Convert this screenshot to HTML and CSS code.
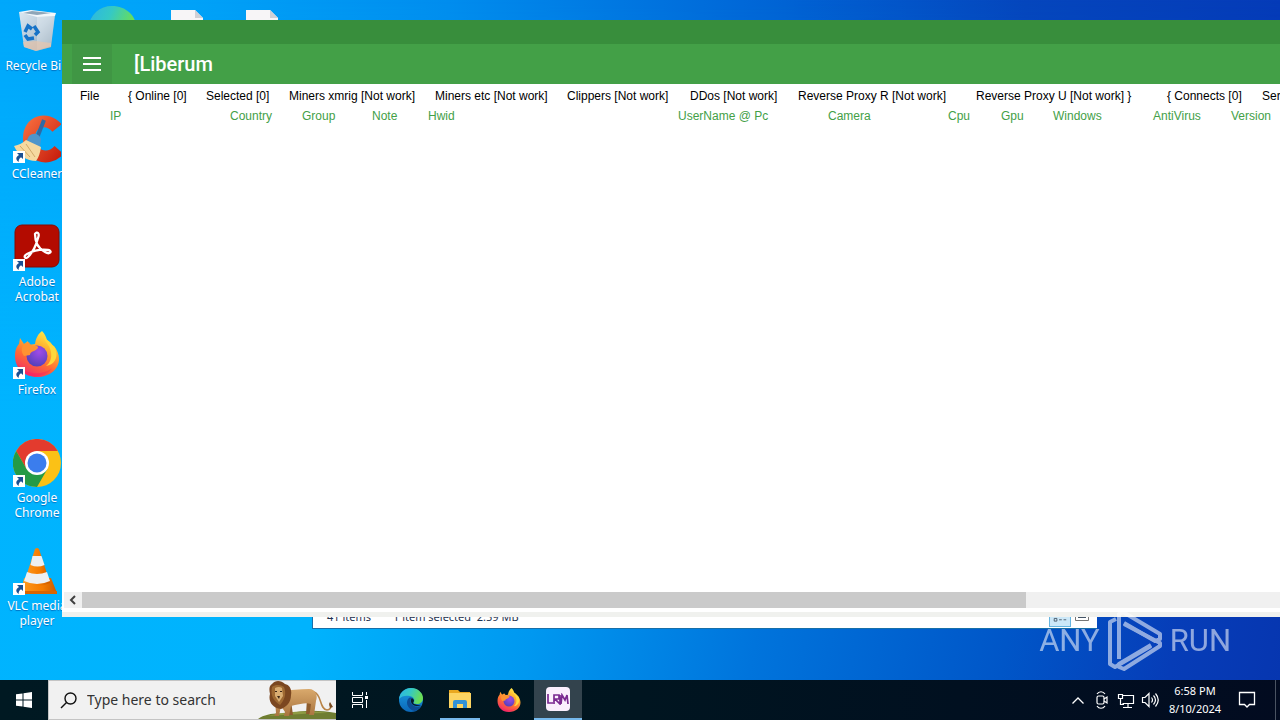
FILE: index.html
```html
<!DOCTYPE html>
<html lang="en">
<head>
<meta charset="utf-8">
<title>Desktop</title>
<link rel="stylesheet" href="styles.css">
</head>
<body>
<svg width="0" height="0" class="defs" aria-hidden="true">
  <defs>
    <linearGradient id="ffOuter" x1="0.8" y1="0" x2="0.3" y2="1"><stop offset="0" stop-color="#fff44f"/><stop offset=".35" stop-color="#ffb02e"/><stop offset=".65" stop-color="#ff6a35"/><stop offset="1" stop-color="#ef2b6b"/></linearGradient>
    <radialGradient id="ffGlobe" cx=".6" cy=".3" r=".8"><stop offset="0" stop-color="#a14be8"/><stop offset="1" stop-color="#4b3fb5"/></radialGradient>
    <linearGradient id="edgeTop" x1="0" y1="0" x2="1" y2=".3"><stop offset="0" stop-color="#2bb4e8"/><stop offset=".5" stop-color="#35c9c4"/><stop offset="1" stop-color="#6ade55"/></linearGradient>
    <linearGradient id="edgeLow" x1="0" y1="0" x2="0" y2="1"><stop offset="0" stop-color="#1b9de2"/><stop offset="1" stop-color="#0b67b8"/></linearGradient>
    <linearGradient id="bin" x1="0" y1="0" x2="1" y2="1"><stop offset="0" stop-color="#dbe8f2"/><stop offset=".5" stop-color="#b6c9d8"/><stop offset="1" stop-color="#8098ab"/></linearGradient>
    <linearGradient id="ccRed" x1="0" y1="0" x2="1" y2="1"><stop offset="0" stop-color="#f4673a"/><stop offset="1" stop-color="#c9210f"/></linearGradient>
    <linearGradient id="cone" x1="0" y1="0" x2="1" y2="0"><stop offset="0" stop-color="#ff9a1f"/><stop offset=".6" stop-color="#f57c00"/><stop offset="1" stop-color="#c95a00"/></linearGradient>
    <linearGradient id="fur" x1="0" y1="0" x2="0" y2="1"><stop offset="0" stop-color="#d9a96c"/><stop offset="1" stop-color="#a9743f"/></linearGradient>
    <symbol id="shortcut" viewBox="0 0 12 12"><path fill="#fff" d="M0 0h12v12H0z"/><path fill="#1b5092" d="M4 2h6v6L8 6.200C6 7.500 5.500 9 5.700 11 2 8.500 3 5.500 6 4z"/></symbol>
    <symbol id="firefox" viewBox="0 0 46 46">
      <path fill="url(#ffOuter)" d="M28 0c3 3 4 6 5 9 2 1 3 2 4 3 1 2 2 3 3 3 3 4 5 8 5 13 0 10-9 18-22 18S1 37 1 25c0-6 2-10 4-12l1-6 4 6 4-3v4l7-1c1-6 3-10 7-13z"/>
      <circle cx="23" cy="25" r="10.500" fill="url(#ffGlobe)"/>
      <path fill="#ff9332" d="M10 13l5-2c1 3 3 4 8 4 2 1 1 3-3 5-3 1-4 2-4 4l-6 1c-3-4-3-8 0-12z"/>
      <path fill="#f06" opacity=".25" d="M2 30c5 12 24 17 36 7-5 10-29 14-36-7z"/>
      <path fill="#ffd83c" d="M29 3c0 7 7 10 8 18 1 6-1 11-5 14 8-1 12-8 10-15-1-7-10-9-13-17z"/>
    </symbol>
    <symbol id="edge" viewBox="0 0 24 24">
      <circle cx="12" cy="12" r="12" fill="url(#edgeLow)"/>
      <path fill="url(#edgeTop)" d="M0 11C1 4 6 0 12 0c7 0 12 5 12 10 0 4-3 6-6 6-3 0-4-1-3-2 1-2 0-5-4-6C7 7 2 8 0 11z"/>
      <path fill="#0d4c94" d="M9 11c-3 5 1 11 7 12 3-1 5-3 6-5-4 2-9 0-10-3-1-2-1-4 1-5-2-1-3 0-4 1z"/>
      <path fill="#071a2b" d="M13 10c2 1 2.500 3 1.500 4s0 3 7.500 3c-4 2-9 1-10-3-.5-2 0-3 1-4z"/>
    </symbol>
  </defs>
</svg>

<div class="screen">
  <main class="desktop">
    <nav class="shortcuts" aria-label="Desktop icons">
      <a class="shortcut" href="#"><span class="pic">
        <svg viewBox="0 0 48 48"><path fill="url(#bin)" d="M6 5l36 2-4 33-15 4-12-4z"/><path fill="#f3f7fa" d="M6 5l12-2 25 3-1 3-18 1z"/><path fill="#8fa6b8" d="M10 6l9-2 19 2-14 2z"/><path fill="#fff" opacity=".3" d="M24 10l18-1-4 30-14 4z"/><path fill="#e5c5ae" opacity=".75" d="M10 35l13-1 15 2 0 4-15 4-12-4z"/><g fill="none" stroke="#1573c8" stroke-width="3.500"><path d="M12 25l3-6 4 3M21 19l4 6-3 3M21 31l-6 1-3-4"/></g></svg></span><span class="name">Recycle Bin</span></a>
      <a class="shortcut" href="#"><span class="pic">
        <svg viewBox="0 0 48 48"><path fill="none" stroke="url(#ccRed)" stroke-width="12" d="M44 13C34 1 16 6 16 23s18 25 30 12"/><path stroke="#2e6aa5" stroke-width="4" d="M31 5L24 23"/><path fill="#4e95cb" d="M16 21c5-4 10-2 12 3l-1 8-14-5z"/><path fill="#f5d9a0" d="M1 31c5-1 9-3 12-6l15 7c-1 6-2 10-5 14-9 0-18-6-22-15z"/><path stroke="#d2a968" fill="none" d="M7 31l10 11M13 29l9 13"/></svg>
        <svg class="mark"><use href="#shortcut"/></svg></span><span class="name">CCleaner</span></a>
      <a class="shortcut" href="#"><span class="pic">
        <svg viewBox="0 0 48 48"><rect x="2" y="2" width="44" height="42" rx="7" fill="#b30b00" stroke="#870900"/><path fill="none" stroke="#fff" stroke-width="2.300" stroke-linejoin="round" d="M22 11c2-3 5-1 3 4-2 8-6 15-10 19-3 3-5-1-1-3 6-3 14-5 21-4 5 1 2 5-3 2-6-3-10-9-10-18z"/></svg>
        <svg class="mark"><use href="#shortcut"/></svg></span><span class="name">Adobe Acrobat</span></a>
      <a class="shortcut" href="#"><span class="pic">
        <svg viewBox="0 0 48 48"><use href="#firefox" x="1" y="0" width="46" height="46"/></svg>
        <svg class="mark"><use href="#shortcut"/></svg></span><span class="name">Firefox</span></a>
      <a class="shortcut" href="#"><span class="pic">
        <svg viewBox="0 0 48 48"><circle cx="24" cy="24" r="24" fill="#fbc116"/><path fill="#e33b2e" d="M3.200 12A24 24 0 0 1 44.800 12H24L13.600 30z"/><path fill="#249a46" d="M3.200 12A24 24 0 0 0 24 48l10.400-18H13.600z"/><circle cx="24" cy="24" r="12" fill="#fff"/><circle cx="24" cy="24" r="9.500" fill="#3b7ded"/></svg>
        <svg class="mark"><use href="#shortcut"/></svg></span><span class="name">Google Chrome</span></a>
      <a class="shortcut" href="#"><span class="pic">
        <svg viewBox="0 0 48 48"><path fill="url(#cone)" d="M11 31h27l6 15H8z"/><path fill="#d96500" d="M8 44h36v3H8z"/><path fill="url(#cone)" d="M22 2q2-2 4 0l11 34q-13 6-26 0z"/><path fill="#edf0f2" d="M19.500 9h9l3 9q-7 3-14 0zM14 25q10 4 20 0l3 9q-13 6-26 0z"/></svg>
        <svg class="mark"><use href="#shortcut"/></svg></span><span class="name">VLC media player</span></a>
    </nav>

    <div class="hidden-row" aria-hidden="true">
      <svg class="edge-icon"><use href="#edge"/></svg>
      <svg class="file" viewBox="0 0 32 40"><path fill="#f7f5f7" d="M0 0h24l8 8v32H0z"/><path fill="#cfd0d6" d="M24 0v8h8z"/></svg>
      <svg class="file" viewBox="0 0 32 40"><path fill="#f7f5f7" d="M0 0h24l8 8v32H0z"/><path fill="#cfd0d6" d="M24 0v8h8z"/></svg>
    </div>

    <section class="explorer" aria-label="File Explorer">
      <span>41 items</span><span>1 item selected&nbsp; 2.59 MB</span>
      <span class="views">
        <svg class="view on" viewBox="0 0 22 18"><path fill="none" stroke="#456" d="M4.500 3.500h3v3h-3zM4.500 9.500h3v3h-3zM10 5h3M15 5h3M10 11h3M15 11h3"/></svg>
        <svg class="view" viewBox="0 0 22 18"><path fill="#fff" stroke="#777" d="M4.500 2.500h13v9h-13z"/><path fill="#456" d="M7 5h8v4H7z"/></svg>
      </span>
    </section>

    <section class="window" aria-label="Liberum">
      <div class="caption"></div>
      <header class="appbar">
        <button class="burger" type="button" aria-label="Menu"><svg viewBox="0 0 18 14"><path stroke="#fff" stroke-width="2" d="M0 1h18M0 7h18M0 13h18"/></svg></button>
        <h1>[Liberum</h1>
      </header>
      <div class="menu" role="menubar">
        <button type="button">File</button><button type="button">{ Online [0]</button><button type="button">Selected [0]</button><button type="button">Miners xmrig [Not work]</button><button type="button">Miners etc [Not work]</button><button type="button">Clippers [Not work]</button><button type="button">DDos [Not work]</button><button type="button">Reverse Proxy R [Not work]</button><button type="button">Reverse Proxy U [Not work] }</button><button type="button">{ Connects [0]</button><button type="button">Ser</button>
      </div>
      <div class="list">
        <table>
          <colgroup><col class="w120"><col class="w72"><col class="w70"><col class="w56"><col class="w250"><col class="w150"><col class="w120"><col class="w53"><col class="w52"><col class="w100"><col class="w78"><col class="w120"></colgroup>
          <thead><tr><th>IP</th><th>Country</th><th>Group</th><th>Note</th><th>Hwid</th><th>UserName @ Pc</th><th>Camera</th><th>Cpu</th><th>Gpu</th><th>Windows</th><th>AntiVirus</th><th>Version</th></tr></thead>
        </table>
      </div>
      <div class="scroll"><button type="button" aria-label="Scroll left"><svg viewBox="0 0 8 10"><path fill="none" stroke="#404040" stroke-width="2" d="M6 1L2 5l4 4"/></svg></button><div class="thumb"></div></div>
      <div class="foot"></div>
    </section>

    <div class="watermark">
      <span>ANY</span>
      <svg viewBox="0 0 54 64"><g fill="none" stroke="#fff" stroke-width="4" stroke-linejoin="round"><path d="M8 10L2 13v42l5 3 36-21"/><path d="M11 50V5l4-2 37 22v5l-5 2-31-18"/><path d="M16 15l36 19v3L16 60l-5-2v-3l32-19"/></g></svg>
      <span>RUN</span>
    </div>
  </main>

  <footer class="taskbar">
    <button class="start" type="button" aria-label="Start"><svg viewBox="0 0 16 16"><path fill="#fff" d="M0 2.300L6.500 1.400V7.500H0zM7.500 1.200L16 0v7.500H7.500zM0 8.500h6.500v6.100L0 13.700zM7.500 8.500H16V16l-8.500-1.200z"/></svg></button>
    <label class="search">
      <svg class="lens" viewBox="0 0 17 17"><g fill="none" stroke="#111" stroke-width="1.400"><circle cx="10.500" cy="6.500" r="5.500"/><path d="M6.500 10.500L1 16"/></g></svg>
      <input type="text" placeholder="Type here to search" aria-label="Search">
      <svg class="lion" viewBox="0 0 78 38"><path fill="#6f7d31" d="M0 38c8-6 20-6 30-5 14-4 30-4 48-1v6z"/><path fill="#8d9a42" d="M10 35c14-4 40-6 60-3-20 0-40 2-60 3z"/><path fill="none" stroke="#b98447" stroke-width="1.500" d="M56 11c8 2 5 17 13 18 3 0 5-3 3-5"/><path fill="#7a4c22" d="M71 23l1-2 3 5-3 1z"/><path fill="#8e5c2d" d="M28 20l5 0 2 14h-5zM49 18l6 2-3 13h-4z"/><path fill="url(#fur)" d="M22 10c10-1 20-2 29-2 7 0 9 7 7 12l-2 14h-5l1-3 1-8c-5-2-11 0-16 1l-4 1-2 10h-5l1-4-4-6-2 10h-5l2-3-1-13z"/><path fill="#7b4720" d="M14 3c3-4 9-4 13 0 5 1 7 6 6 11 0 8-5 12-10 14-9-1-13-8-11-15-1-5-1-8 2-10z"/><path fill="#9e6932" d="M14 6c4-3 9-2 12 0 2 5 2 11-4 18-6-4-10-9-8-18z"/><path fill="#d9ad72" d="M17 7q4-2 7 0l1 8-4 6-4-6z"/><path fill="#3a2414" d="M17 10h2v1h-2zM22 10h2v1h-2zM19 15h3l-1 3z"/></svg>
    </label>
    <button class="task" type="button" aria-label="Task view"><svg class="i18" viewBox="0 0 18 16"><path fill="none" stroke="#fff" d="M1.500 0v3.500h10V0M1.500 16v-3.500h10V16M1.500 5.500h10v5h-10zM15.500 0v3M15.500 8v8"/><path fill="#fff" d="M14 4h3v3h-3z"/></svg></button>
    <button class="task wide" type="button" aria-label="Edge"><svg class="i24"><use href="#edge"/></svg></button>
    <button class="task open" type="button" aria-label="File Explorer"><svg class="i24" viewBox="0 0 24 24"><path fill="#e9a820" d="M1 3h9l2 2h10v4H1z"/><path fill="#fcd462" d="M1 6h22v15H1z"/><path fill="#3292d8" d="M5 21v-6q0-2 2-2h10q2 0 2 2v6h-4v-4H9v4z"/></svg></button>
    <button class="task wide" type="button" aria-label="Firefox"><svg class="i24"><use href="#firefox"/></svg></button>
    <button class="task active" type="button" aria-label="Liberum"><span class="lrm"><svg viewBox="0 0 22 12"><path fill="none" stroke="#7b2a91" stroke-width="1.700" d="M1 1v9h5M7 11V2h5v4H8l5 5V2M14 11l1-9 3 5 2-5 1 9"/></svg></span></button>
    <div class="tray">
      <svg class="chev" viewBox="0 0 12 7"><path fill="none" stroke="#fff" stroke-width="1.300" d="M.5 6.500L6 1l5.500 5.500"/></svg>
      <svg class="i18" viewBox="0 0 18 18"><g fill="none" stroke="#fff" stroke-width="1.200"><rect x="4" y="5" width="7" height="8" rx="1.500"/><path d="M11 8l3-2v6l-3-2M4 3c2-3 6-3 8 0M4 15c2 3 6 3 8 0"/></g></svg>
      <svg class="i18" viewBox="0 0 18 18"><g fill="none" stroke="#fff" stroke-width="1.200"><path d="M5.500 4.500h11v8h-11M11 13v3M6 16.500h9M1.500 3.500h4v4h-4zM3.500 8v5.500H7"/></g></svg>
      <svg class="i18" viewBox="0 0 18 18"><g fill="none" stroke="#fff" stroke-width="1.200"><path d="M1.500 6.500h2.500l4-4v13l-4-4H1.500zM10.500 6.500q2 2.500 0 5M12.500 4.500q4 4.500 0 9M14.500 2.500q5.500 6.500 0 13"/></g></svg>
      <div class="clock"><span>6:58 PM</span><span>8/10/2024</span></div>
      <svg class="note" viewBox="0 0 18 18"><path fill="none" stroke="#fff" stroke-width="1.300" d="M1.500 1.500h15v12h-5L9 16l-2.500-2.500h-5z"/></svg>
      <span class="peek"></span>
    </div>
  </footer>
</div>
</body>
</html>
```
FILE: styles.css
```css
* { box-sizing: border-box; }
body { margin: 0; font-family: "Noto Sans", "Open Sans", sans-serif; }
.defs { position: absolute; }
button { margin: 0; padding: 0; border: 0; background: none; font: inherit; color: inherit; }
svg { display: block; }
.screen { display: flex; flex-direction: column; height: 100vh; overflow: hidden; }
.desktop {
  position: relative; flex: 1; min-height: 0; overflow: hidden;
  background: linear-gradient(90deg, #00a8fb 0, #00a2f8 15%, #008dee 35%, #0068d8 58%, #0546bd 80%, #053bb8 100%);
}
.desktop::before {
  content: ""; position: absolute; inset: 0;
  background: linear-gradient(100deg, #00b4ff 0, #00b3fd 30%, #0098f0 46%, #0074dc 62%, #0056c8 80%, #063db8 92%, #0636b0 100%);
  -webkit-mask-image: linear-gradient(#0000, #000 60%);
  mask-image: linear-gradient(#0000, #000 60%);
}

.shortcuts { position: relative; display: grid; grid-auto-rows: 108px; width: 74px; padding-top: 7px; }
.shortcut { display: flex; flex-direction: column; align-items: center; gap: 3px; color: #fff; text-decoration: none; }
.pic { position: relative; width: 48px; height: 48px; }
.pic svg { width: 48px; height: 48px; }
.pic .mark { position: absolute; left: 0; bottom: 0; width: 12px; height: 12px; }
.name { width: 64px; font-size: 12px; line-height: 15px; text-align: center; text-shadow: 0 1px 1px #0070c0; }
.shortcut:first-child .name { white-space: nowrap; }

.hidden-row { position: absolute; left: 88px; top: 6px; display: flex; align-items: flex-start; gap: 35px; }
.edge-icon { width: 48px; height: 48px; }
.file { width: 32px; height: 40px; margin-top: 4px; }
.file + .file { margin-left: 8px; }

.explorer {
  position: absolute; left: 312px; right: 183px; bottom: 51px; height: 40px;
  display: flex; align-items: flex-end; gap: 22px; padding: 0 4px 1px 14px;
  background: #fff; border-bottom: 1px solid #186fa8; border-left: 1px solid #186fa8;
  font-size: 11px; line-height: 20px; color: #1e3250;
}
.views { display: flex; margin-left: auto; align-items: center; }
.view { width: 22px; height: 18px; }
.view.on { background: #cce8f8; border: 1px solid #66b5e0; }

.window {
  position: absolute; left: 62px; right: 0; top: 20px; bottom: 63px;
  display: flex; flex-direction: column; overflow: hidden; background: #fff; color: #000;
  font-family: "Liberation Sans", Arial, sans-serif; font-size: 12px;
}
.caption { height: 24px; flex: none; background: #388e3c; }
.appbar { display: flex; align-items: center; gap: 22px; flex: none; height: 40px; padding-left: 10px; background: #43a047; color: #fff; }
.burger { display: grid; place-items: center; width: 40px; height: 40px; background: #409644; }
.burger svg { width: 18px; height: 14px; }
h1 { margin: 0; font: 500 20px/24px Roboto, sans-serif; }
.menu {
  display: grid; flex: none; align-items: center; height: 24px; padding-left: 18px;
  grid-template-columns: 48px 78px 83px 146px 132px 123px 108px 178px 191px 95px auto;
}
.menu button { text-align: left; white-space: nowrap; }
.list { flex: 1; min-height: 0; overflow: hidden; padding-left: 48px; }
table { width: 1241px; table-layout: fixed; border-collapse: collapse; }
th { padding: 0; font-size: 12px; line-height: 16px; font-weight: 400; text-align: left; color: #43a047; white-space: nowrap; }
.w52 { width: 52px; } .w53 { width: 53px; } .w56 { width: 56px; } .w70 { width: 70px; } .w72 { width: 72px; } .w78 { width: 78px; }
.w100 { width: 100px; } .w120 { width: 120px; } .w150 { width: 150px; } .w250 { width: 250px; }
.scroll { display: flex; flex: none; height: 16px; margin-left: 2px; background: #f0f0f0; }
.scroll button { display: grid; place-items: center; width: 18px; }
.scroll button svg { width: 8px; height: 10px; }
.thumb { width: 944px; background: #cacaca; }
.foot { flex: none; height: 9px; border-top: 4px solid #fff; background: #f0f1ee; }

.watermark {
  position: absolute; right: 49px; bottom: 7px; display: flex; align-items: center; gap: 8px;
  color: #fff; opacity: .55; font: 31px/64px Roboto, sans-serif;
}
.watermark svg { width: 54px; height: 64px; }

.taskbar { display: flex; flex: none; height: 40px; background: linear-gradient(90deg, #001922, #001520 50%, #020b20 100%); color: #fff; }
.start { display: grid; place-items: center; width: 48px; }
.start svg { width: 16px; height: 16px; }
.search { display: flex; align-items: center; width: 288px; padding-left: 11px; background: #f1f1f1; border: 1px solid #c4c4c4; border-right: 0; overflow: hidden; }
.lens { flex: none; width: 17px; height: 17px; }
.search input { flex: 1; min-width: 0; padding: 0 0 0 10px; border: 0; outline: 0; background: none; font: 14px/20px "Noto Sans", sans-serif; color: #333; }
.search input::placeholder { color: #333; opacity: 1; }
.lion { flex: none; width: 78px; height: 38px; }
.task { display: grid; place-items: center; width: 48px; }
.task.wide { width: 54px; }
.task.open { width: 40px; margin-left: 2px; border-bottom: 2px solid #76b9ed; }
.task.open + .wide { padding-left: 4px; }
.task.active { width: 48px; background: #33434d; border-bottom: 2px solid #76b9ed; }
.i24 { width: 24px; height: 24px; }
.i18 { width: 18px; height: 18px; }
.lrm { display: grid; place-items: center; width: 24px; height: 24px; border-radius: 4px; background: #fbeffd; }
.lrm svg { width: 22px; height: 12px; }
.tray { display: flex; align-items: center; gap: 6px; margin-left: auto; }
.chev { width: 12px; height: 7px; margin-right: 3px; }
.clock { display: flex; flex-direction: column; align-items: center; width: 60px; font-size: 11px; line-height: 18px; }
.note { width: 18px; height: 18px; margin: 0 19px 0 7px; }
.peek { width: 5px; height: 40px; margin-left: -6px; border-left: 1px solid #4a5362; }
```
